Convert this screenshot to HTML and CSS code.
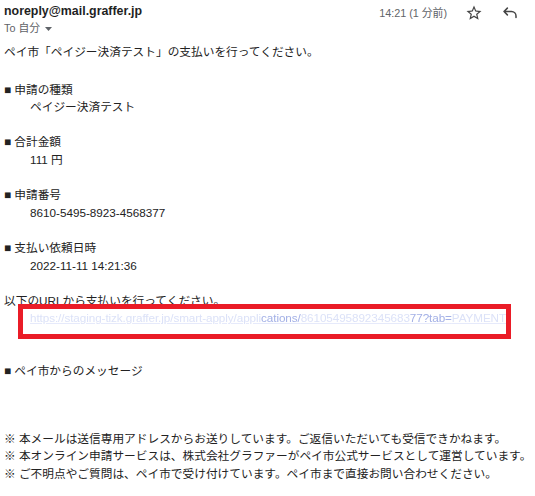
FILE: index.html
```html
<!DOCTYPE html>
<html lang="ja">
<head>
<meta charset="utf-8">
<title>noreply@mail.graffer.jp</title>
<link rel="stylesheet" href="styles.css">
</head>
<body>
<div class="mail">
  <div class="header">
    <div class="who">
      <div class="sender">noreply@mail.graffer.jp</div>
      <div class="to">To 自分 <svg class="caret" width="7" height="4" viewBox="0 0 7 4"><path d="M0 0h7L3.5 4z" fill="#5f6368"/></svg></div>
    </div>
    <div class="meta">
      <span class="time">14:21 (1 分前)</span>
      <svg class="icon star" width="18" height="18" viewBox="0 0 24 24"><path fill="#444" d="M22 9.24l-7.19-.62L12 2 9.19 8.63 2 9.24l5.46 4.73L5.82 21 12 17.27 18.18 21l-1.63-7.03L22 9.24zM12 15.4l-3.76 2.27 1-4.28-3.32-2.88 4.38-.38L12 6.1l1.71 4.04 4.38.38-3.32 2.88 1 4.28L12 15.4z"/></svg>
      <svg class="icon reply" width="18" height="18" viewBox="0 0 24 24"><path fill="none" stroke="#444" stroke-width="2" stroke-linecap="round" stroke-linejoin="round" d="M8.5 5.5L4 10l4.5 4.5M4 10h10a6 6 0 0 1 6 6v2"/></svg>
    </div>
  </div>

  <div class="body">
    <p class="intro">ペイ市「ペイジー決済テスト」の支払いを行ってください。</p>

    <div class="field first">
      <div class="label">■ 申請の種類</div>
      <div class="value">ペイジー決済テスト</div>
    </div>
    <div class="field">
      <div class="label">■ 合計金額</div>
      <div class="value">111 円</div>
    </div>
    <div class="field">
      <div class="label">■ 申請番号</div>
      <div class="value">8610-5495-8923-4568377</div>
    </div>
    <div class="field">
      <div class="label">■ 支払い依頼日時</div>
      <div class="value">2022-11-11 14:21:36</div>
    </div>

    <div class="field">
      <div class="line">以下のURLから支払いを行ってください。</div>
      <div class="url-line">
        <span class="url"><span class="f1">https://staging-tizk.graffer.jp/smart-apply/appli</span><span class="f2">cations/</span><span class="f1">86105495892345683</span><span class="f2">77?tab=</span><span class="f1">PAYMENT</span></span>
        <div class="mark"></div>
      </div>
    </div>

    <div class="field message">
      <div class="label">■ ペイ市からのメッセージ</div>
    </div>

    <div class="footer">
      <div class="line">※ 本メールは送信専用アドレスからお送りしています。ご返信いただいても受信できかねます。</div>
      <div class="line">※ 本オンライン申請サービスは、株式会社グラファーがペイ市公式サービスとして運営しています。</div>
      <div class="line">※ ご不明点やご質問は、ペイ市で受け付けています。ペイ市まで直接お問い合わせください。</div>
    </div>
  </div>
</div>
</body>
</html>
```

FILE: styles.css
```css
* { box-sizing: border-box; }

html, body {
  margin: 0;
  padding: 0;
  background: #ffffff;
}

body {
  font-family: "Liberation Sans", Arial, "Noto Sans CJK JP", sans-serif;
  color: #222222;
  width: 535px;
  overflow: hidden;
}

.mail {
  padding: 3px 0 0 4px;
}

.header {
  display: flex;
  justify-content: space-between;
  align-items: flex-start;
}

.sender {
  font-size: 12.4px;
  font-weight: bold;
  line-height: 17px;
  color: #1f1f1f;
}

.to {
  font-size: 10.8px;
  line-height: 16px;
  color: #5f6368;
  display: flex;
  align-items: center;
  gap: 3px;
}

.caret {
  margin-left: 2px;
  margin-top: 1px;
}

.meta {
  display: flex;
  align-items: center;
  height: 17px;
  margin-top: 1px;
  padding-right: 16px;
}

.time {
  font-size: 10.8px;
  color: #5f6368;
  line-height: 16px;
}

.icon {
  display: block;
  margin-left: 18px;
}

.body {
  font-size: 11.7px;
  line-height: 17.6px;
  margin-top: 7px;
}

.intro {
  margin: 0;
}

.field {
  margin-top: 17.6px;
}

.field.first {
  margin-top: 20px;
}

.value {
  padding-left: 26px;
}

.url-line {
  position: relative;
  padding-left: 26px;
  white-space: nowrap;
  height: 17.6px;
}

.url {
  display: inline-block;
  vertical-align: top;
  letter-spacing: -0.08px;
  text-decoration: underline;
  text-decoration-color: #e6eafb;
  filter: blur(0.6px);
}

.f1 { color: #dce2f8; }
.f2 { color: #a3b0e6; }

.mark {
  position: absolute;
  left: 14px;
  top: -5px;
  width: 493px;
  height: 35px;
  border: 5px solid #ea1c27;
}

.message {
  margin-top: 35.2px;
}

.footer {
  margin-top: 50px;
  line-height: 17.5px;
}
```
